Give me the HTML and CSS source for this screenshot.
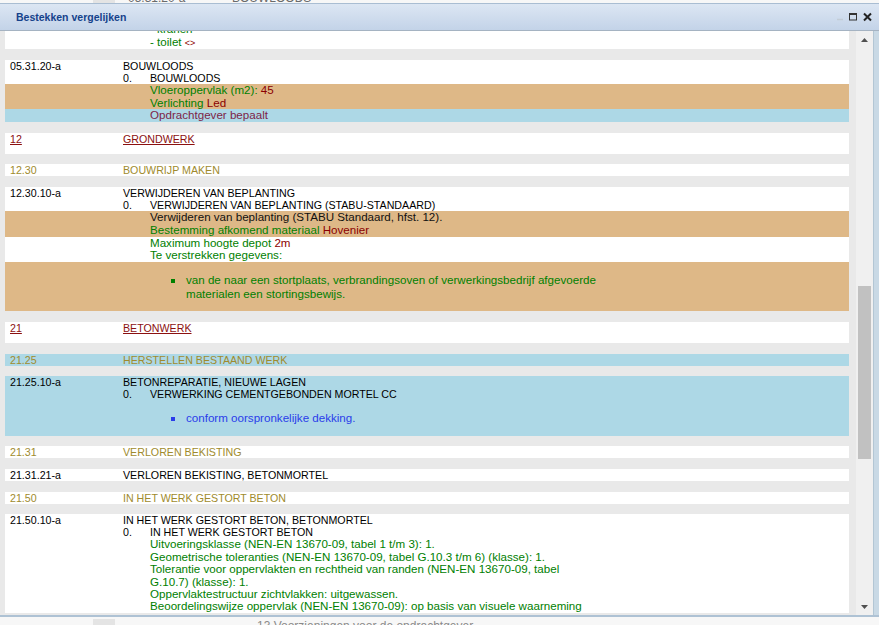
FILE: index.html
```html
<!DOCTYPE html>
<html lang="nl">
<head>
<meta charset="utf-8">
<title>Bestekken vergelijken</title>
<link rel="stylesheet" href="styles.css">
</head>
<body>
<div class="page">
  <div class="bgrow top"><span></span><span class="gcol"></span><span></span><span>05.31.20-a</span><span>BOUWLOODS</span></div>
  <div class="bgrow bottom"><span></span><span class="gcol"></span><span></span><span></span><span class="bgtext">13 Voorzieningen voor de opdrachtgever</span></div>
</div>

<div class="win">
  <div class="hd">
    <span class="title">Bestekken vergelijken</span>
    <svg class="tools" width="36" height="10" viewBox="0 0 36 10">
      <line x1="1" y1="7.5" x2="7" y2="7.5" stroke="#c3ccd6" stroke-width="1.5"/>
      <rect x="13.5" y="1.5" width="7" height="6.5" fill="none" stroke="#333" stroke-width="1"/>
      <line x1="13.5" y1="2" x2="20.5" y2="2" stroke="#333" stroke-width="2"/>
      <path d="M28 1.5 L35 8.5 M35 1.5 L28 8.5" stroke="#222" stroke-width="2"/>
    </svg>
  </div>
  <div class="bd">
    <div class="view">
      <div class="list">
        <div class="card">
          <div class="t g">- wastafel</div>
          <div class="t g">- kranen</div>
          <div class="t"><span class="g">- toilet</span> <span class="tag">&lt;&gt;</span></div>
        </div>

        <div class="card">
          <div class="l1"><span>05.31.20-a</span><span>BOUWLOODS</span></div>
          <div class="l2"><span>0.</span><span>BOUWLOODS</span></div>
          <div class="p tan"><span class="g">Vloeroppervlak (m2):</span> <span class="v">45</span></div>
          <div class="p tan"><span class="g">Verlichting</span> <span class="v">Led</span></div>
          <div class="p lb"><span class="pv">Opdrachtgever bepaalt</span></div>
        </div>

        <div class="card chap">
          <div class="l1"><span class="u">12</span><span class="u">GRONDWERK</span></div>
        </div>

        <div class="card par">
          <div class="l1"><span>12.30</span><span>BOUWRIJP MAKEN</span></div>
        </div>

        <div class="card">
          <div class="l1"><span>12.30.10-a</span><span>VERWIJDEREN VAN BEPLANTING</span></div>
          <div class="l2"><span>0.</span><span>VERWIJDEREN VAN BEPLANTING (STABU-STANDAARD)</span></div>
          <div class="p tan">Verwijderen van beplanting (STABU Standaard, hfst. 12).</div>
          <div class="p tan"><span class="g">Bestemming afkomend materiaal</span> <span class="v">Hovenier</span></div>
          <div class="p"><span class="g">Maximum hoogte depot</span> <span class="v">2m</span></div>
          <div class="p"><span class="g">Te verstrekken gegevens:</span></div>
          <div class="tan">
            <ul class="ul g">
              <li><span>van de naar een stortplaats, verbrandingsoven of verwerkingsbedrijf afgevoerde<br>materialen een stortingsbewijs.</span></li>
            </ul>
          </div>
        </div>

        <div class="card chap">
          <div class="l1"><span class="u">21</span><span class="u">BETONWERK</span></div>
        </div>

        <div class="card par blue">
          <div class="l1"><span>21.25</span><span>HERSTELLEN BESTAAND WERK</span></div>
        </div>

        <div class="card blue">
          <div class="l1"><span>21.25.10-a</span><span>BETONREPARATIE, NIEUWE LAGEN</span></div>
          <div class="l2"><span>0.</span><span>VERWERKING CEMENTGEBONDEN MORTEL CC</span></div>
          <ul class="ul bl">
            <li><span>conform oorspronkelijke dekking.</span></li>
          </ul>
        </div>

        <div class="card par">
          <div class="l1"><span>21.31</span><span>VERLOREN BEKISTING</span></div>
        </div>

        <div class="card">
          <div class="l1"><span>21.31.21-a</span><span>VERLOREN BEKISTING, BETONMORTEL</span></div>
        </div>

        <div class="card par">
          <div class="l1"><span>21.50</span><span>IN HET WERK GESTORT BETON</span></div>
        </div>

        <div class="card">
          <div class="l1"><span>21.50.10-a</span><span>IN HET WERK GESTORT BETON, BETONMORTEL</span></div>
          <div class="l2"><span>0.</span><span>IN HET WERK GESTORT BETON</span></div>
          <div class="t g">Uitvoeringsklasse (NEN-EN 13670-09, tabel 1 t/m 3): 1.</div>
          <div class="t g">Geometrische toleranties (NEN-EN 13670-09, tabel G.10.3 t/m 6) (klasse): 1.</div>
          <div class="t g">Tolerantie voor oppervlakten en rechtheid van randen (NEN-EN 13670-09, tabel<br>G.10.7) (klasse): 1.</div>
          <div class="t g">Oppervlaktestructuur zichtvlakken: uitgewassen.</div>
          <div class="t g">Beoordelingswijze oppervlak (NEN-EN 13670-09): op basis van visuele waarneming</div>
        </div>
      </div>
    </div>
    <div class="sb">
      <div class="sb-btn"><svg width="7" height="4" viewBox="0 0 7 4"><polygon points="0,4 7,4 3.5,0" fill="#505050"/></svg></div>
      <div class="sb-track"><div class="thumb"></div></div>
      <div class="sb-btn"><svg width="7" height="4" viewBox="0 0 7 4"><polygon points="0,0 7,0 3.5,4" fill="#505050"/></svg></div>
    </div>
    <div class="rf"></div>
  </div>
  <div class="ft"></div>
</div>
</body>
</html>
```

FILE: styles.css
```css
html, body {
  margin: 0;
  padding: 0;
}
body {
  width: 879px;
  height: 625px;
  overflow: hidden;
  position: relative;
  background: #f7f7f7;
  font-family: "Liberation Sans", Arial, sans-serif;
}

/* background page behind the window */
.page {
  height: 625px;
  display: flex;
  flex-direction: column;
  justify-content: space-between;
  overflow: hidden;
}
.bgrow {
  display: grid;
  grid-template-columns: 93px 22px 13px 104px 1fr;
  font-size: 12px;
  line-height: 14px;
  height: 14px;
  color: #6a6a6a;
  white-space: nowrap;
}
.bgrow.top { margin-top: -9px; }
.bgrow.bottom { margin-bottom: -8px; grid-template-columns: 93px 22px 13px 129px 1fr; }
.gcol { background: #e4e4e4; }
.bgtext { color: #8a8a8a; }

/* window */
.win {
  position: absolute;
  top: 3px;
  left: 0;
  width: 879px;
  height: 614px;
  box-sizing: border-box;
  border-top: 1px solid #a9bdd2;
  display: flex;
  flex-direction: column;
  background: #c8d9e6;
}
.hd {
  height: 26px;
  flex: none;
  border-bottom: 1px solid #a5b3c2;
  background: linear-gradient(#dce6f3, #c3d3e8);
  display: flex;
  align-items: center;
  padding-left: 16px;
}
.title {
  font-weight: bold;
  font-size: 10.5px;
  color: #15428b;
}
.tools {
  margin-left: auto;
  margin-right: 7px;
  display: block;
}
.bd {
  flex: 1;
  min-height: 0;
  display: flex;
}
.ft {
  height: 2px;
  flex: none;
  background: #aec2d4;
}

/* content */
.view {
  flex: 1;
  overflow: hidden;
  background: #e9e9e9;
  font-size: 8pt;
  color: #000;
}
.list {
  margin-top: -20px;
  padding: 0 7px 0 5px;
}
.card {
  background: #fff;
  margin-bottom: 1em;
}
.card.blue { background: #add8e6; }
.l1 {
  display: grid;
  grid-template-columns: 113px 1fr;
  padding-left: 5px;
}
.l2 {
  display: grid;
  grid-template-columns: 27px 1fr;
  padding-left: 118px;
}
.p {
  padding-left: 145px;
  font-size: 11.6px;
  line-height: 12.75px;
  color: #111;
}
.t {
  padding-left: 145px;
  font-size: 11.6px;
  line-height: 12.4px;
}
.tan { background: #deb887; }
.lb { background: #add8e6; }
.g { color: #008000; }
.v { color: #8b0000; }
.pv { color: #7e1f48; }
.tag { color: #8b0000; font-size: 9px; }

.chap { padding-bottom: 9px; }
.chap .l1 { color: #8b1010; }
.u { text-decoration: underline; }
.par .l1 { color: #a08b2d; }

.ul {
  margin: 0;
  padding: 10.667px 0 10.667px 166px;
  list-style: none;
  font-size: 11.6px;
  line-height: 14px;
}
.ul li {
  display: grid;
  grid-template-columns: 15px 1fr;
}
.ul li::before {
  content: "";
  width: 4px;
  height: 4px;
  margin-top: 6px;
  background: currentColor;
}
.bl { color: #2a3cea; }

/* scrollbar */
.sb {
  width: 17px;
  flex: none;
  background: #f0f0f0;
  display: flex;
  flex-direction: column;
}
.sb-btn {
  height: 17px;
  flex: none;
  display: flex;
  align-items: center;
  justify-content: center;
}
.sb-btn svg { display: block; }
.sb-track {
  flex: 1;
  padding-top: 238px;
}
.thumb {
  height: 173px;
  margin: 0 2px;
  background: #c1c1c1;
}
.rf {
  width: 6px;
  flex: none;
  box-sizing: border-box;
  border-left: 1px solid #b3c6d4;
  background: #c9d9e5;
}
```
